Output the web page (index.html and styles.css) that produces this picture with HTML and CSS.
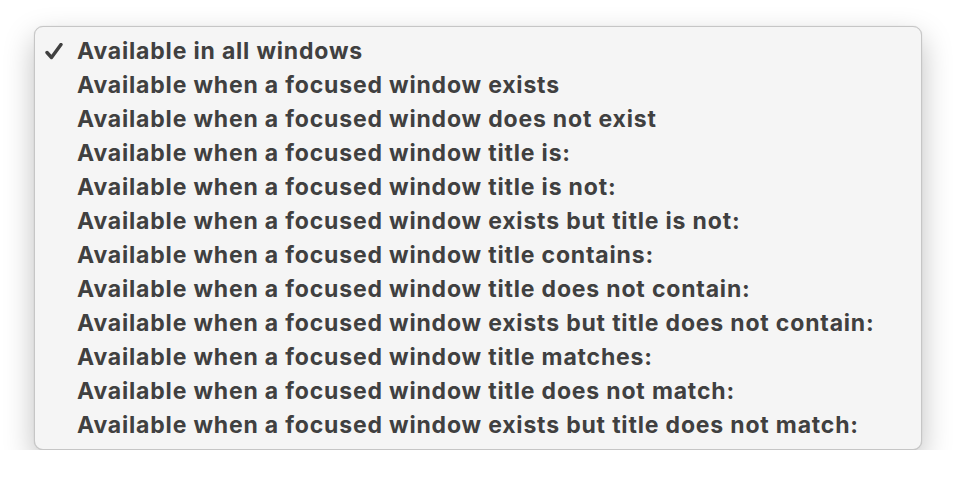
FILE: index.html
```html
<!DOCTYPE html>
<html>
<head>
<meta charset="utf-8">
<link rel="stylesheet" href="styles.css">
</head>
<body>
<div class="menu">
  <div class="item checked"><span class="check"><svg width="18" height="17" viewBox="0 0 18 17"><path d="M2 9.5 L6.5 14.5 L16 1.5" fill="none" stroke="#404040" stroke-width="3.4" stroke-linecap="round" stroke-linejoin="round"/></svg></span><span class="label">Available in all windows</span></div>
  <div class="item"><span class="check"></span><span class="label">Available when a focused window exists</span></div>
  <div class="item"><span class="check"></span><span class="label">Available when a focused window does not exist</span></div>
  <div class="item"><span class="check"></span><span class="label">Available when a focused window title is:</span></div>
  <div class="item"><span class="check"></span><span class="label">Available when a focused window title is not:</span></div>
  <div class="item"><span class="check"></span><span class="label">Available when a focused window exists but title is not:</span></div>
  <div class="item"><span class="check"></span><span class="label">Available when a focused window title contains:</span></div>
  <div class="item"><span class="check"></span><span class="label">Available when a focused window title does not contain:</span></div>
  <div class="item"><span class="check"></span><span class="label">Available when a focused window exists but title does not contain:</span></div>
  <div class="item"><span class="check"></span><span class="label">Available when a focused window title matches:</span></div>
  <div class="item"><span class="check"></span><span class="label">Available when a focused window title does not match:</span></div>
  <div class="item"><span class="check"></span><span class="label">Available when a focused window exists but title does not match:</span></div>
</div>
</body>
</html>
```

FILE: styles.css
```css
html, body {
  margin: 0;
  padding: 0;
  background: #ffffff;
}
body {
  padding: 26px 0 0 34px;
  font-family: Inter, "Liberation Sans", sans-serif;
}
.menu {
  width: 888px;
  height: 424px;
  box-sizing: border-box;
  padding: 7px 0 9px;
  background: #f5f5f5;
  border: 1px solid #c6c6c6;
  border-radius: 9px;
  box-shadow: 0 12px 30px rgba(0,0,0,0.25), 0 0 1px rgba(0,0,0,0.2);
}
.item {
  display: flex;
  align-items: center;
  height: 34px;
  color: #404040;
  font-size: 23px;
  font-weight: 700;
  letter-spacing: 0.82px;
}
.check {
  width: 42px;
  flex: none;
  padding-left: 10px;
  box-sizing: border-box;
  display: flex;
  align-items: center;
}
.label {
  white-space: nowrap;
}
```
